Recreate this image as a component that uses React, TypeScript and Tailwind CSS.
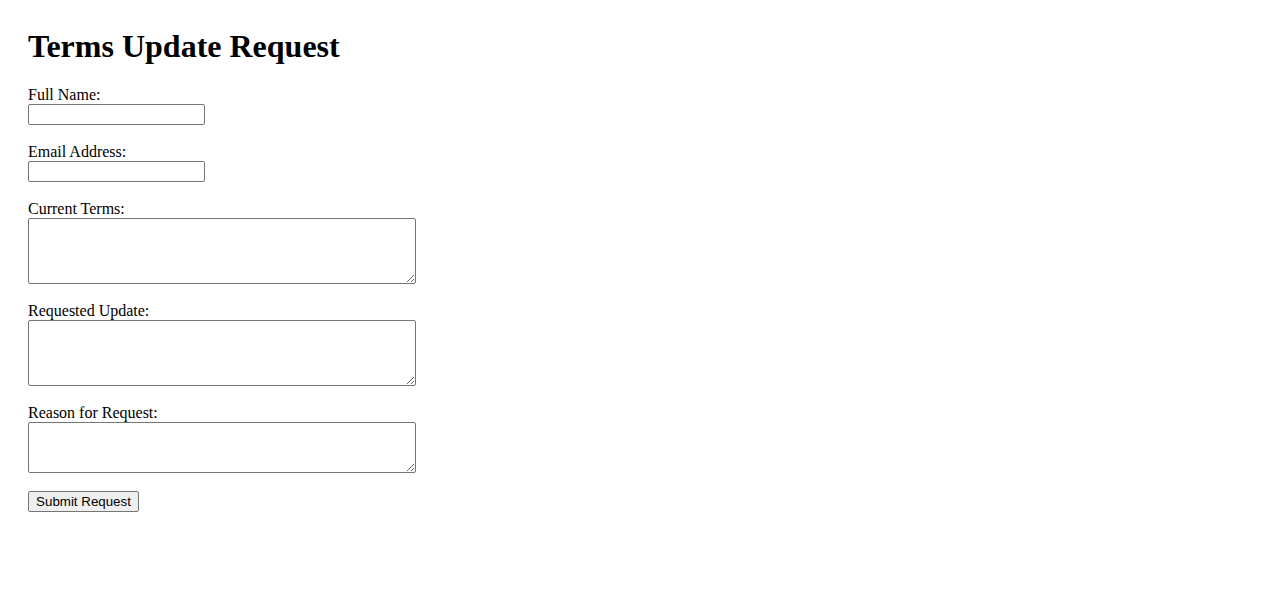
export default function App() {
  const fields = [
    { label: "Full Name:", kind: "input" },
    { label: "Email Address:", kind: "input" },
    { label: "Current Terms:", kind: "area", h: "h-[66px]" },
    { label: "Requested Update:", kind: "area", h: "h-[66px]" },
    { label: "Reason for Request:", kind: "area", h: "h-[51px]" },
  ];

  return (
    <div className="min-h-[601px] bg-white p-[28px] text-black font-['Liberation_Serif',serif]">
      <h1 className="text-[32px] leading-[37px] font-bold mb-[21px]">Terms Update Request</h1>
      <form onSubmit={(e) => e.preventDefault()}>
        {fields.map((f, i) => (
          <div key={i} className="mb-[18px]">
            <label className="block text-[16px] leading-[18px]">{f.label}</label>
            {f.kind === "input" ? (
              <input
                type="text"
                className="block w-[177px] h-[21px] border border-[#767676] rounded-[2px] px-[2px] text-[13.33px] font-['Liberation_Sans',sans-serif] bg-white"
              />
            ) : (
              <textarea
                className={`block w-[388px] ${f.h} border border-[#767676] rounded-[2px] p-[2px] text-[13.33px] font-['Liberation_Mono',monospace] bg-white resize`}
              />
            )}
          </div>
        ))}
        <button
          type="submit"
          className="block h-[21px] w-[111px] bg-[#efefef] border border-[#767676] rounded-[2px] px-[6px] text-[13.33px] leading-[15px] font-['Liberation_Sans',sans-serif] text-black"
        >
          Submit Request
        </button>
      </form>
    </div>
  );
}
